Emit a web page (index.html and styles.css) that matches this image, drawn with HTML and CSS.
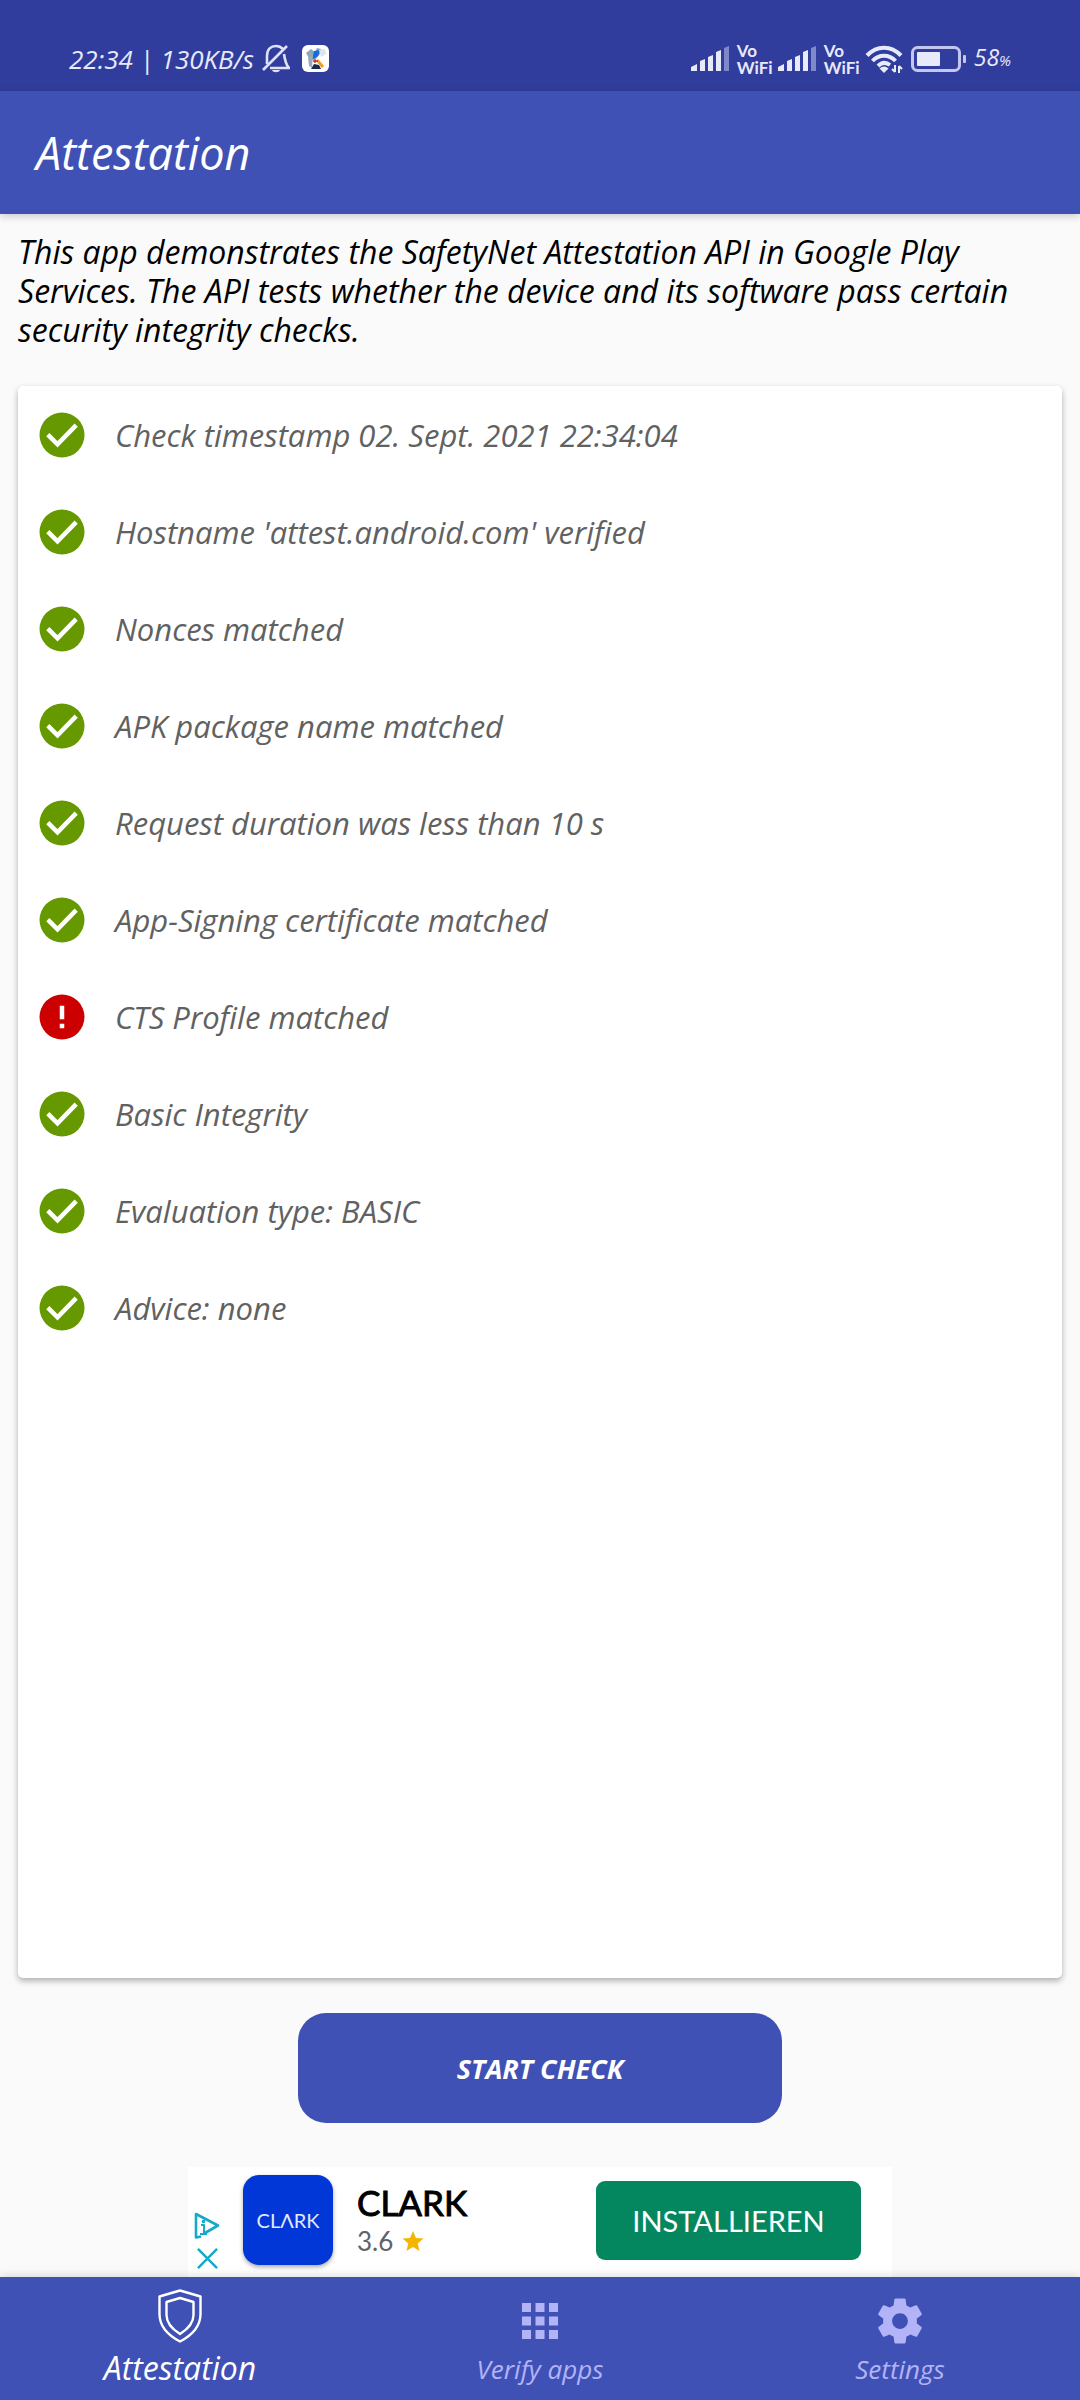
FILE: index.html
```html
<!DOCTYPE html>
<html lang="en">
<head>
  <meta charset="UTF-8">
  <meta name="viewport" content="width=device-width, initial-scale=1.0">
  <title>Attestation</title>
  <link rel="stylesheet" href="styles.css">
</head>
<body>
  <!-- shared icons -->
  <svg class="defs" aria-hidden="true">
    <symbol id="ok" viewBox="0 0 24 24">
      <circle cx="12" cy="12" r="10" fill="#669900"/>
      <path d="M5.700 11.800l4.300 4.300 8.300-8.500" fill="none" stroke="#fff" stroke-width="2"/>
    </symbol>
    <symbol id="error" viewBox="0 0 24 24">
      <circle cx="12" cy="12" r="10" fill="#cc0000"/>
      <path d="M11 7h2v6h-2zM11 15h2v2h-2z" fill="#fff"/>
    </symbol>
    <symbol id="signal" viewBox="0 0 38 27">
      <path d="M0 26v-4l6-3v7zM9 26V16l5-2v12zM17 26V12l5-2v16zM25 26V7l5-2v21z" fill="#e8e9fb"/>
      <path d="M33 26V3l5-2v25z" fill="#8088cc"/>
    </symbol>
  </svg>

  <div class="status-bar">
    <div class="status-group">
      <span class="clock">22:34 | 130KB/s</span>
      <svg class="bell" viewBox="0 0 28 30" fill="none" stroke="#dfe1f8" stroke-width="2.6">
        <path d="M5 20V12C5 5 9 2 14 2c3 0 5 1 7 3M22 10c1 7 2 11 5 14H8M1 26L25 2"/>
        <path d="M10 26h8c-1 3-7 3-8 0z" fill="#dfe1f8" stroke="none"/>
      </svg>
      <svg class="app-badge" viewBox="0 0 27 27">
        <rect width="27" height="27" rx="6" fill="#fff"/>
        <path d="M4 8l5-4 4 3 2-4 4 1-1 5-4 5-6 1z" fill="#8fa5b8"/>
        <path d="M12 6l6-1-2 6-6 4z" fill="#1769e0"/>
        <path d="M9 24l3-5 5 1 2 4z" fill="#152b52"/>
        <path d="M6 13l5-3-1 13-3-2z" fill="#99aabb"/>
        <path d="M17 5l6-1 1 5-5 3z" fill="#dce5eb"/>
        <path d="M15 15l6 7" stroke="#f39c24" stroke-width="3"/>
        <path d="M11 16h5M13 14v4" stroke="#c82b2b" stroke-width="1.4"/>
      </svg>
    </div>
    <div class="status-group">
      <svg class="signal"><use href="#signal"/></svg>
      <span class="vowifi">Vo<br>WiFi</span>
      <svg class="signal"><use href="#signal"/></svg>
      <span class="vowifi">Vo<br>WiFi</span>
      <svg class="wifi" viewBox="0 0 38 28" fill="none" stroke="#e8e9fb" stroke-width="4">
        <path d="M2 10.500C12 0 26 0 36 10.500M7.500 16C14 9 24 9 30.500 16M13 21C17 17 21 17 25 20"/>
        <path d="M14.500 23.500q4.500-4 9 0L19 28z" fill="#e8e9fb" stroke="none"/>
        <path d="M30 20v7M27 24l3 3M34 28v-7M37 24l-3-3" stroke-width="2"/>
      </svg>
      <svg class="battery" viewBox="0 0 55 26">
        <rect x="1.500" y="1.500" width="47" height="23" rx="5" fill="none" stroke="#c3c7ef" stroke-width="3"/>
        <rect x="6" y="6" width="23" height="14" rx="1" fill="#e8e9fb"/>
        <rect x="52" y="9" width="3" height="8" rx="1" fill="#c3c7ef"/>
      </svg>
      <span class="charge">58<small>%</small></span>
    </div>
  </div>

  <header class="app-bar">
    <h1>Attestation</h1>
  </header>

  <main>
    <p class="intro">This app demonstrates the SafetyNet Attestation API in Google Play Services. The API tests whether the device and its software pass certain security integrity checks.</p>

    <ul class="card">
      <li><svg><use href="#ok"/></svg>Check timestamp 02. Sept. 2021 22:34:04</li>
      <li><svg><use href="#ok"/></svg>Hostname 'attest.android.com' verified</li>
      <li><svg><use href="#ok"/></svg>Nonces matched</li>
      <li><svg><use href="#ok"/></svg>APK package name matched</li>
      <li><svg><use href="#ok"/></svg>Request duration was less than 10 s</li>
      <li><svg><use href="#ok"/></svg>App-Signing certificate matched</li>
      <li><svg><use href="#error"/></svg>CTS Profile matched</li>
      <li><svg><use href="#ok"/></svg>Basic Integrity</li>
      <li><svg><use href="#ok"/></svg>Evaluation type: BASIC</li>
      <li><svg><use href="#ok"/></svg>Advice: none</li>
    </ul>

    <button class="start" type="button">START CHECK</button>
  </main>

  <aside class="ad">
    <div class="ad-controls">
      <svg viewBox="0 0 26 27" fill="none" stroke="#16a9c8" stroke-width="2.600" stroke-linejoin="round">
        <path d="M7 24.500l-5 1V2l22 11.500-13 7.500"/>
        <path d="M7 13h3v9M6 22h7" stroke-width="2"/>
        <circle cx="9.500" cy="9.500" r="1.800" fill="#16a9c8" stroke="none"/>
      </svg>
      <button class="ad-close" type="button" aria-label="Close ad">
        <svg viewBox="0 0 22 22" fill="none" stroke="#16a9c8" stroke-width="2.600"><path d="M1 1l20 20M21 1L1 21"/></svg>
      </button>
    </div>
    <div class="ad-logo">CLΛRK</div>
    <div class="ad-info">
      <strong>CLARK</strong>
      <span>3.6
        <svg viewBox="0 0 24 24"><path d="M12 1l3.200 7.800 8.300.6-6.400 5.300 2.100 8.200L12 18.500l-7.200 4.400 2.100-8.200L.5 9.400l8.300-.6z" fill="#f4b400"/></svg>
      </span>
    </div>
    <button class="install" type="button">INSTALLIEREN</button>
  </aside>

  <nav>
    <a class="active" href="#attestation">
      <svg viewBox="0 0 54 54" fill="none" stroke="#fff" stroke-width="2.400" stroke-linejoin="round">
        <path d="M27 1.500l20.500 6V25c0 12-9 21.500-20.500 27.500C15.500 46.500 6.500 37 6.500 25V7.500z"/>
        <path d="M27 9l13.500 4v13c0 8-5.500 14-13.500 19-8-5-13.500-11-13.500-19V13z"/>
      </svg>
      Attestation
    </a>
    <a href="#verify">
      <svg viewBox="0 0 24 24" fill="#b3b3f7"><path d="M4 8h4V4H4v4zm6 12h4v-4h-4v4zm-6 0h4v-4H4v4zm0-6h4v-4H4v4zm6 0h4v-4h-4v4zm6-10v4h4V4h-4zm-6 4h4V4h-4v4zm6 6h4v-4h-4v4zm0 6h4v-4h-4v4z"/></svg>
      Verify apps
    </a>
    <a href="#settings">
      <svg viewBox="0 0 24 24" fill="#b3b3f7"><path d="M19.430 12.980c.040-.320.070-.640.070-.980s-.030-.660-.070-.980l2.110-1.650c.190-.150.240-.420.120-.640l-2-3.460c-.120-.220-.390-.300-.610-.220l-2.490 1c-.520-.400-1.080-.730-1.690-.980l-.380-2.650C14.460 2.180 14.250 2 14 2h-4c-.250 0-.460.180-.490.420l-.380 2.650c-.610.250-1.170.590-1.690.980l-2.490-1c-.230-.090-.490 0-.610.220l-2 3.460c-.130.220-.070.490.120.640l2.110 1.650c-.040.320-.070.650-.070.980s.030.660.070.980l-2.110 1.650c-.190.150-.240.420-.120.640l2 3.460c.120.220.390.300.610.220l2.490-1c.520.400 1.080.730 1.690.980l.380 2.650c.030.240.240.420.490.420h4c.250 0 .460-.180.490-.420l.380-2.650c.610-.250 1.170-.590 1.690-.980l2.490 1c.230.090.490 0 .610-.220l2-3.460c.120-.220.070-.490-.120-.640l-2.110-1.650zM12 15.500c-1.930 0-3.500-1.570-3.500-3.500s1.570-3.500 3.500-3.500 3.500 1.570 3.500 3.500-1.570 3.500-3.500 3.500z"/></svg>
      Settings
    </a>
  </nav>
</body>
</html>
```

FILE: styles.css
```css
* {
  box-sizing: border-box;
}
body {
  margin: 0;
  min-height: 100vh;
  display: flex;
  flex-direction: column;
  background: #fafafa;
  color: #000;
  font-family: "Open Sans", sans-serif;
  font-style: italic;
  font-size: 31px;
}
svg {
  display: block;
  flex: none;
}
button {
  border: none;
  font-family: inherit;
  cursor: pointer;
}
.defs {
  position: absolute;
  width: 0;
  height: 0;
}

/* status bar */
.status-bar {
  height: 91px;
  padding: 26px 69px 0;
  display: flex;
  justify-content: space-between;
  align-items: center;
  background: #303d9d;
  color: #e8e9fb;
}
.status-group {
  display: flex;
  align-items: center;
  gap: 8px;
}
.clock, .charge {
  font-size: 26px;
  line-height: 32px;
  white-space: nowrap;
}
.charge {
  font-size: 23px;
}
.charge small {
  font-size: 15px;
}
.bell {
  width: 28px;
  height: 30px;
}
.app-badge {
  width: 27px;
  height: 27px;
  margin-left: 4px;
}
.signal {
  width: 38px;
  height: 27px;
}
.vowifi {
  width: 33px;
  font-family: Lato, sans-serif;
  font-size: 17px;
  line-height: 17px;
  font-style: normal;
  font-weight: bold;
}
.wifi {
  width: 38px;
  height: 28px;
}
.battery {
  width: 55px;
  height: 26px;
}

.app-bar {
  position: relative;
  height: 123px;
  padding: 0 36px;
  display: flex;
  align-items: center;
  background: #3f51b5;
  color: #fff;
  box-shadow: 0 2px 8px rgba(0, 0, 0, 0.2);
}
.app-bar h1 {
  margin: 0;
  font-size: 45px;
  font-weight: 500;
}

main {
  flex: 1;
  padding: 18px 18px 44px;
  display: flex;
  flex-direction: column;
}
.intro {
  margin: 0 0 37px;
  font-size: 32px;
  line-height: 39px;
}
.card {
  flex: 1;
  margin: 0 0 35px;
  padding: 0;
  list-style: none;
  background: #fff;
  border-radius: 5px;
  box-shadow: 0 3px 6px rgba(0, 0, 0, 0.3);
}
.card li {
  height: 97px;
  padding: 0 17px;
  display: flex;
  align-items: center;
  gap: 26px;
  color: #616161;
}
.card svg {
  width: 54px;
  height: 54px;
}
.start {
  width: 484px;
  height: 110px;
  align-self: center;
  border-radius: 28px;
  background: #3f51b5;
  color: #fff;
  font-size: 27px;
  font-style: italic;
  font-weight: bold;
}

/* ad banner */
.ad {
  width: 704px;
  height: 110px;
  padding: 0 31px 4px 6px;
  align-self: center;
  display: flex;
  align-items: center;
  background: #fff;
  font-family: Lato, sans-serif;
  font-style: normal;
}
.ad-controls {
  align-self: flex-end;
  width: 26px;
  margin: 0 23px 4px 0;
  display: flex;
  flex-direction: column;
  align-items: center;
  gap: 9px;
}
.ad-controls > svg {
  width: 26px;
  height: 27px;
}
.ad-close {
  padding: 0;
  background: none;
}
.ad-close svg {
  width: 21px;
  height: 21px;
}
.ad-logo {
  width: 90px;
  height: 90px;
  margin-right: 24px;
  display: flex;
  align-items: center;
  justify-content: center;
  border-radius: 16px;
  background: #0037d6;
  color: #e4e8ff;
  font-size: 20px;
  box-shadow: 0 2px 4px rgba(0, 0, 0, 0.35);
}
.ad-info {
  flex: 1;
}
.ad-info strong {
  display: block;
  font-size: 35px;
  line-height: 42px;
  font-weight: normal;
  -webkit-text-stroke: 1px #000;
}
.ad-info span {
  display: flex;
  align-items: center;
  gap: 9px;
  color: #5f6368;
  font-size: 26px;
  line-height: 36px;
}
.ad-info svg {
  width: 22px;
  height: 22px;
}
.install {
  width: 265px;
  height: 79px;
  border-radius: 9px;
  background: #04875f;
  color: #fff;
  font-size: 29px;
}

nav {
  height: 123px;
  display: flex;
  background: #3f51b5;
  box-shadow: 0 -2px 8px rgba(0, 0, 0, 0.12);
}
nav a {
  flex: 1;
  padding-top: 17px;
  display: flex;
  flex-direction: column;
  align-items: center;
  gap: 4px;
  color: #b3b3f7;
  font-size: 26px;
  line-height: 34px;
  text-decoration: none;
}
nav a.active {
  padding-top: 12px;
  gap: 8px;
  color: #fff;
  font-size: 32px;
  font-weight: 500;
}
nav svg {
  width: 54px;
  height: 54px;
}
```
